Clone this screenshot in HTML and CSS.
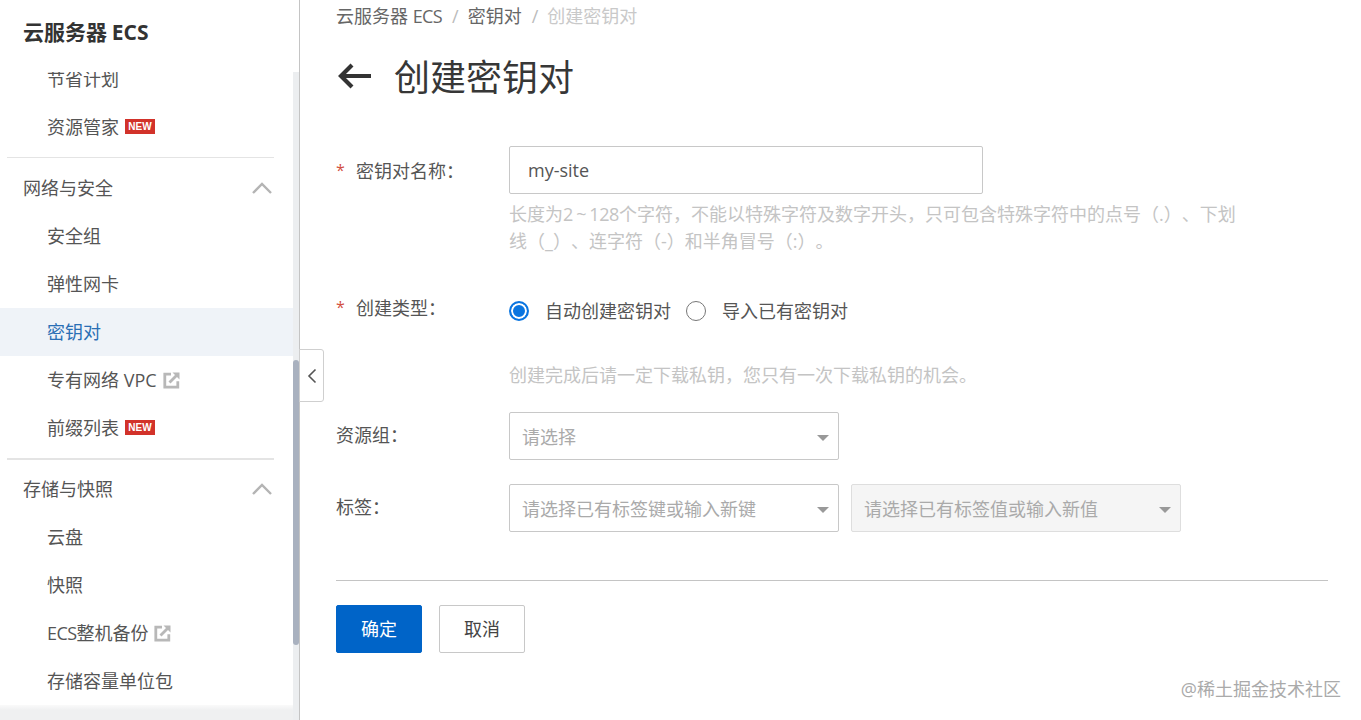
FILE: index.html
```html
<!DOCTYPE html>
<html lang="zh-CN">
<head>
<meta charset="utf-8">
<title>创建密钥对</title>
<link rel="stylesheet" href="styles.css">
</head>
<body>
<div class="app">
  <aside class="sidebar">
    <h2 class="side-title">云服务器 <span class="side-title-en">ECS</span></h2>
    <div class="side-scroll">
      <ul class="menu">
        <li class="item">节省计划</li>
        <li class="item">资源管家<span class="badge">NEW</span></li>
        <li class="divider"></li>
        <li class="group">网络与安全<svg class="chev" viewBox="0 0 20 12"><path d="M1 11 L10 2 L19 11"/></svg></li>
        <li class="item">安全组</li>
        <li class="item">弹性网卡</li>
        <li class="item active">密钥对</li>
        <li class="item">专有网络 VPC<svg class="ext" viewBox="0 0 17 17"><path d="M8 2.2H1.8v13h13V9.2" /><path d="M6.5 10.5 14 3" /><path class="ext-tip" d="M9.5 0.5h7v7z"/></svg></li>
        <li class="item">前缀列表<span class="badge">NEW</span></li>
        <li class="divider divider-low"></li>
        <li class="group">存储与快照<svg class="chev" viewBox="0 0 20 12"><path d="M1 11 L10 2 L19 11"/></svg></li>
        <li class="item">云盘</li>
        <li class="item">快照</li>
        <li class="item"><span class="tight">ECS</span>整机备份<svg class="ext" viewBox="0 0 17 17"><path d="M8 2.2H1.8v13h13V9.2" /><path d="M6.5 10.5 14 3" /><path class="ext-tip" d="M9.5 0.5h7v7z"/></svg></li>
        <li class="item">存储容量单位包</li>
      </ul>
      <div class="track"><div class="thumb"></div></div>
      <div class="side-foot"></div>
    </div>
    <button class="collapse" type="button" aria-label="收起"><svg viewBox="0 0 10 16"><path d="M8.5 1.5 2 8l6.5 6.5"/></svg></button>
  </aside>

  <main class="main">
    <nav class="crumbs"><span>云服务器 <span class="tight">ECS</span></span><i>/</i><span>密钥对</span><i>/</i><span class="crumb-now">创建密钥对</span></nav>
    <h1 class="page-title">
      <svg class="back" viewBox="0 0 34 26"><path d="M33 13H3M14 2 3 13l11 11"/></svg>
      创建密钥对
    </h1>

    <form class="form">
      <div class="row">
        <label class="label"><b class="req">*</b>密钥对名称：</label>
        <div class="field">
          <input class="input" type="text" value="my-site">
          <p class="help help-name">长度为<span class="num">2 ~ 128</span>个字符，不能以特殊字符及数字开头，只可包含特殊字符中的点号（.）、下划<br>线（_）、连字符（-）和半角冒号（:）。</p>
        </div>
      </div>
      <div class="row row-type">
        <label class="label label-type"><b class="req">*</b>创建类型：</label>
        <div class="field">
          <div class="radios">
            <span class="radio on"></span><span class="radio-text">自动创建密钥对</span>
            <span class="radio"></span><span class="radio-text">导入已有密钥对</span>
          </div>
          <p class="help help-type">创建完成后请一定下载私钥，您只有一次下载私钥的机会。</p>
        </div>
      </div>
      <div class="row row-select">
        <label class="label">资源组：</label>
        <div class="select"><span>请选择</span></div>
      </div>
      <div class="row row-select">
        <label class="label">标签：</label>
        <div class="select"><span>请选择已有标签键或输入新键</span></div>
        <div class="select disabled"><span>请选择已有标签值或输入新值</span></div>
      </div>
      <hr class="rule">
      <div class="actions">
        <button class="btn primary" type="button">确定</button>
        <button class="btn" type="button">取消</button>
      </div>
    </form>
  </main>
</div>
<div class="watermark">@稀土掘金技术社区</div>
</body>
</html>
```

FILE: styles.css
```css
* { box-sizing: border-box; }
html, body { margin: 0; height: 100%; overflow: hidden; background: #fff; }
body {
  font-family: "Open Sans", "Noto Sans CJK SC", sans-serif;
  font-size: 18px;
  color: #555;
  position: relative;
  text-spacing-trim: space-all;
}
.app { display: flex; height: 720px; }
.tight { letter-spacing: -0.6px; }

/* sidebar */
.sidebar {
  width: 300px;
  flex: none;
  border-right: 1px solid #c4c4c4;
  display: flex;
  flex-direction: column;
  position: relative;
}
.side-title {
  margin: 0;
  height: 72px;
  flex: none;
  padding: 17px 0 0 23px;
  font-size: 21px;
  line-height: 28px;
  font-weight: 700;
  color: #333;
  font-family: "Noto Sans CJK SC", sans-serif;
}
.side-title-en { font-family: "Open Sans", sans-serif; font-size: 21px; }
.side-scroll { flex: 1; position: relative; overflow: hidden; }
.menu { list-style: none; margin: -17px 0 0; padding: 0 6px 0 0; }
.item, .group {
  height: 48px;
  display: flex;
  align-items: center;
  line-height: 48px;
  white-space: nowrap;
}
.item { padding-left: 47px; }
.group { padding-left: 23px; position: relative; }
.active { background: #eff3f8; color: #2a6fb5; }
.divider { height: 1px; margin: 6px 19px 6px 7px; background: #e4e4e4; }
.divider-low { height: 2px; margin: 6px 19px 5px 7px; }
.badge {
  margin-left: 6px;
  width: 30px;
  height: 15px;
  margin-top: -2px;
  background: #d2322a;
  color: #fff;
  font: 700 10px/15px "Liberation Sans", sans-serif;
  text-align: center;
}
.chev {
  position: absolute;
  left: 252px;
  top: 18px;
  width: 20px;
  height: 12px;
  fill: none;
  stroke: #b4b4b4;
  stroke-width: 2.4;
}
.ext {
  margin-left: 6px;
  width: 17px;
  height: 17px;
  fill: none;
  stroke: #b8b8b8;
  stroke-width: 2.8;
}
.ext-tip { fill: #b8b8b8; stroke: none; }
.track {
  position: absolute;
  top: 0;
  right: 0;
  bottom: 0;
  width: 6px;
  background: #eceef0;
}
.thumb {
  position: absolute;
  top: 288px;
  left: 0;
  width: 6px;
  height: 285px;
  background: #a9b1bf;
  border-radius: 3px;
}
.side-foot {
  position: absolute;
  left: 0;
  right: 6px;
  bottom: 0;
  height: 15px;
  background: linear-gradient(#fafafa, #eff0f1 35%);
}
.collapse {
  position: absolute;
  left: 299px;
  top: 349px;
  width: 25px;
  height: 53px;
  padding: 0;
  display: flex;
  align-items: center;
  justify-content: center;
  background: #fff;
  border: 1px solid #cfcfcf;
  border-radius: 0 3px 3px 0;
}
.collapse svg { width: 10px; height: 16px; fill: none; stroke: #555; stroke-width: 1.6; }

/* main */
.main { flex: 1; min-width: 0; padding: 0 33px 0 36px; }
.crumbs { height: 32px; line-height: 33px; display: flex; white-space: nowrap; color: #666; }
.crumbs i { font-style: normal; color: #bbb; margin: 0 9px 0 10px; }
.crumb-now { color: #c9c9c9; }
.page-title {
  margin: 18px 0 0;
  height: 50px;
  display: flex;
  align-items: center;
  font-size: 36px;
  font-weight: 400;
  line-height: 50px;
  color: #373737;
  font-family: "Noto Sans CJK SC", sans-serif;
}
.back {
  width: 34px;
  height: 26px;
  margin: 2px 22px 0 2px;
  fill: none;
  stroke: #333;
  stroke-width: 4.2;
}

.form { margin-top: 46px; }
.row { display: flex; align-items: flex-start; }
.label { width: 173px; flex: none; line-height: 48px; white-space: nowrap; }
.req {
  display: inline-block;
  width: 20px;
  font-weight: 400;
  color: #d2503f;
  font-size: 16px;
  vertical-align: 2px;
}
.field { flex: none; }
.input {
  display: block;
  width: 474px;
  height: 48px;
  padding: 0 18px;
  border: 1px solid #c8c8c8;
  border-radius: 2px;
  font: inherit;
  color: #555;
  outline: none;
}
.help { margin: 0; color: #c4c4c4; line-height: 27px; }
.help-name { white-space: nowrap; margin-top: 7px; }
.num { letter-spacing: -0.4px; word-spacing: -1px; }
.row-type { margin-top: 41px; margin-bottom: -1px; }
.label-type { margin-top: -13px; }
.radios { display: flex; align-items: center; height: 28px; margin-top: 1px; white-space: nowrap; }
.radio {
  width: 20px;
  height: 20px;
  flex: none;
  border-radius: 50%;
  border: 1.5px solid #777;
  background: #fff;
  margin-right: 16px;
}
.radio.on {
  border: 2px solid #0a75e0;
  background: #0a75e0;
  box-shadow: inset 0 0 0 2px #fff;
}
.radio-text { margin-right: 15px; color: #555; line-height: 28px; }
.help-type { margin-top: 37px; }
.row-select { margin-top: 24px; }
.row-select .label { line-height: 46px; }
.select {
  position: relative;
  width: 330px;
  height: 48px;
  flex: none;
  padding-left: 12px;
  line-height: 48px;
  border: 1px solid #c8c8c8;
  border-radius: 2px;
  color: #aaa;
  white-space: nowrap;
}
.select::after {
  content: "";
  position: absolute;
  right: 9px;
  top: 22px;
  border-style: solid;
  border-width: 6px 6px 0;
  border-color: #999 transparent transparent;
}
.select.disabled { margin-left: 12px; background: #f5f5f5; border-color: #dedede; }
.rule { margin: 48px 0 0; height: 1px; border: 0; background: #c4c4c4; }
.actions { display: flex; gap: 17px; margin-top: 24px; }
.btn {
  width: 86px;
  height: 48px;
  padding: 0 0 2px;
  border: 1px solid #c8c8c8;
  border-radius: 2px;
  background: #fff;
  font: inherit;
  color: #444;
}
.btn.primary { background: #0064c8; border-color: #0064c8; color: #fff; }

.watermark {
  position: absolute;
  right: 20px;
  top: 676px;
  line-height: 26px;
  color: #aaa;
  white-space: nowrap;
}
```
